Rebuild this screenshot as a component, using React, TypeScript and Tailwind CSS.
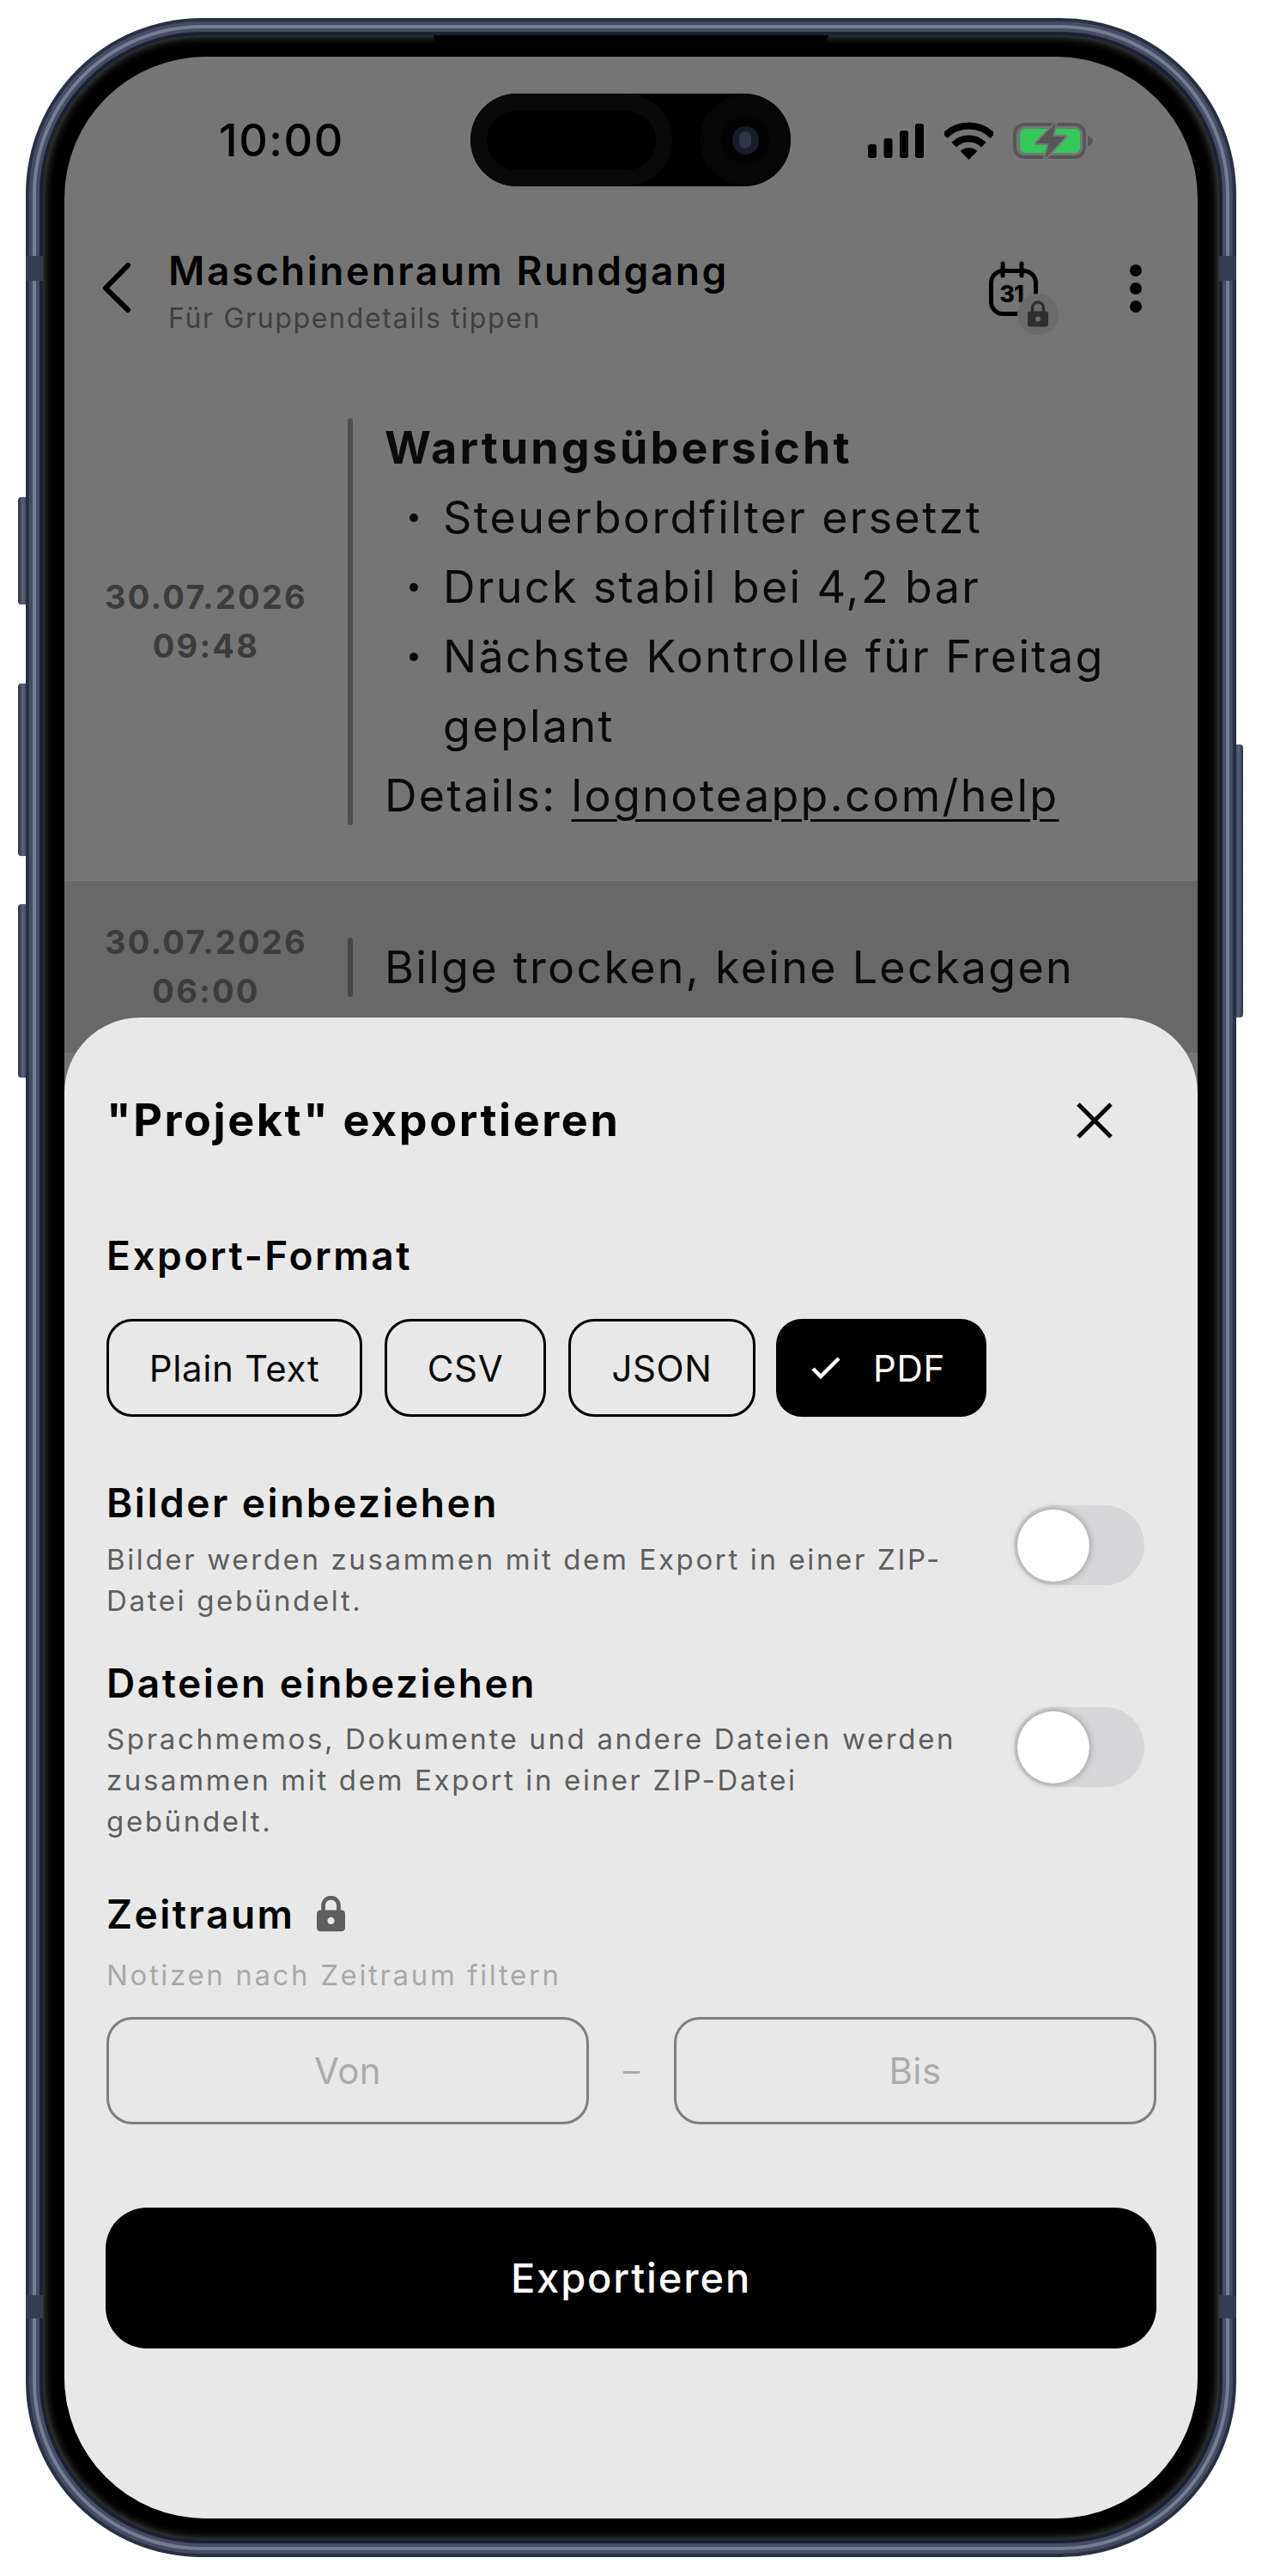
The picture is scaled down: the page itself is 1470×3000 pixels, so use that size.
import React from 'react';

const SANS = 'font-["Inter","Noto_Sans",sans-serif]';

const SideKey = ({ className }: { className: string }) => (
  <div className={`absolute left-[-9px] w-[11px] rounded-l-[4px] bg-gradient-to-r from-[#2b3145] via-[#5a6278] to-[#3a4156] ${className}`} />
);

const Band = ({ className }: { className: string }) => (
  <div className={`absolute w-[20px] bg-[#363c50] ${className}`} />
);

const Lock = ({ w, fill, hole }: { w: number; fill: string; hole: string }) => (
  <svg width={w} viewBox="0 0 24 30" fill="none">
    <path d="M5.5 14V8a6.5 6.5 0 0 1 13 0v6" stroke={fill} strokeWidth="3.4" />
    <rect y="12" width="24" height="18" rx="3" fill={fill} />
    <circle cx="12" cy="21" r="3" fill={hole} />
  </svg>
);

const StatusIcons = () => (
  <div className="flex items-center">
    <svg width="65" height="40" viewBox="0 0 65 40" fill="#000">
      <rect x="0" y="24" width="10" height="16" rx="3" />
      <rect x="18.5" y="17" width="10" height="23" rx="3" />
      <rect x="37" y="8" width="10" height="32" rx="3" />
      <rect x="55" y="0" width="10" height="40" rx="3" />
    </svg>
    <svg className="ml-[24px]" width="57" height="44" viewBox="0 0 57 44" fill="none">
      <path d="M.6 16.1a39.5 39.5 0 0 1 55.8 0" stroke="#000" strokeWidth="8" />
      <path d="M11.2 26.7a24.5 24.5 0 0 1 34.6 0" stroke="#000" strokeWidth="8" />
      <path d="M28.5 44l-9.9-9.9a14 14 0 0 1 19.8 0z" fill="#000" />
    </svg>
    <svg className="ml-[23px]" width="93" height="44" viewBox="0 0 93 44" fill="none">
      <rect x="2" y="3" width="81" height="38" rx="11" stroke="#565656" strokeWidth="4" />
      <rect x="8" y="8" width="70" height="28" rx="6" fill="#34c759" />
      <path d="M87 16c3 .5 6 3 6 6s-3 5.500-6 6z" fill="#565656" />
      <path d="M50 1 27 25h15l-5 18 24-26H46z" fill="#565656" stroke="#757575" strokeWidth="4" strokeLinejoin="round" paintOrder="stroke" />
    </svg>
  </div>
);

const CalendarLocked = () => (
  <svg width="82" height="84" viewBox="0 0 82 84" fill="none" className="mt-[19px] shrink-0 overflow-visible">
    <rect x="2.500" y="9.500" width="52" height="50" rx="14" stroke="#000" strokeWidth="5" />
    <path d="M16 1v14M38 1v14" stroke="#000" strokeWidth="5" strokeLinecap="round" />
    <text x="26" y="46" textAnchor="middle" fontFamily="Inter, sans-serif" fontSize="27" fontWeight="800" letterSpacing="-1" fill="#000">31</text>
    <circle cx="57" cy="60" r="24" fill="#6b6b6b" />
    <svg x="45" y="44" width="24" height="31" viewBox="0 0 24 30" fill="none">
      <path d="M5.500 14V8a6.500 6.500 0 0 1 13 0v6" stroke="#2e2e2e" strokeWidth="3.400" />
      <rect y="12" width="24" height="18" rx="3" fill="#2e2e2e" />
      <circle cx="12" cy="21" r="3" fill="#6b6b6b" />
    </svg>
  </svg>
);

const DateCol = ({ date, time }: { date: string; time: string }) => (
  <div className="w-[330px] shrink-0 text-center text-[38px] leading-[57px] font-bold tracking-[0.058em] text-[#3c3c3c]">
    <div>{date}</div>
    <div>{time}</div>
  </div>
);

const Bullet = ({ children }: { children: React.ReactNode }) => (
  <li className="flex">
    <span className="flex h-[81px] w-[68px] shrink-0 items-center justify-center">
      <span className="h-[10px] w-[10px] rounded-full bg-[#0a0a0a]" />
    </span>
    <span className="max-w-[830px]">{children}</span>
  </li>
);

const Toggle = ({ className }: { className: string }) => (
  <div className={`mr-[13px] flex h-[93px] w-[152px] shrink-0 items-center rounded-full bg-[#d6d6d8] pl-[4px] ${className}`}>
    <div className="h-[84px] w-[84px] rounded-full bg-white shadow-[0_0_8px_rgba(0,0,0,0.35)]" />
  </div>
);

const Chip = ({ label, className }: { label: string; className: string }) => (
  <div className={`flex h-[114px] items-center justify-center rounded-[30px] border-[3px] border-black text-[42px] tracking-[0.015em] text-[#0a0a0a] ${className}`}>
    {label}
  </div>
);

const DateInput = ({ label }: { label: string }) => (
  <div className="flex h-[125px] w-[562px] items-center justify-center rounded-[30px] border-[3px] border-[#7f7f7f] text-[42px] tracking-[0.01em] text-[#ababab]">
    {label}
  </div>
);

export default function App() {
  return (
    <div className={`h-[3000px] w-[1470px] overflow-hidden bg-white pl-[30px] pt-[21px] ${SANS}`}>
      <div className="relative h-[2957px] w-[1410px]">
        <SideKey className="top-[558px] h-[125px]" />
        <SideKey className="top-[775px] h-[201px]" />
        <SideKey className="top-[1032px] h-[202px]" />
        <div className="absolute right-[-8px] top-[846px] h-[318px] w-[10px] rounded-r-[4px] bg-gradient-to-l from-[#2b3145] via-[#5a6278] to-[#3a4156]" />

        {/* metal frame, rings from dark to the bright edge and back */}
        <div className="relative h-full rounded-[205px] bg-[#2a3043] p-[4px]">
          <div className="h-full rounded-[201px] bg-[#454d63] p-[4px]">
            <div className="h-full rounded-[197px] bg-[#757d92] p-[4px]">
              <div className="h-full rounded-[193px] bg-[#454d63] p-[4px]">
                <div className="h-full rounded-[189px] bg-[#1c2234] p-[4px]">
                  <div className="relative h-full rounded-[185px] bg-black p-[25px] shadow-[inset_0_0_12px_#666]">
                    <div className="absolute left-1/2 top-0 h-[8px] w-[460px] -translate-x-1/2 rounded-b-[10px] bg-black" />

                    {/* screen */}
                    <div className="relative h-[2867px] w-[1320px] overflow-hidden rounded-[165px] bg-[#757575]">
                      {/* dynamic island */}
                      <div className="absolute left-[473px] top-[43px] flex h-[108px] w-[373px] items-center rounded-full bg-black">
                        <div className="flex h-[108px] w-[235px] items-center justify-center rounded-full bg-[#090909]">
                          <div className="h-[69px] w-[197px] rounded-full bg-black" />
                        </div>
                        <div className="ml-[32px] flex h-[106px] w-[106px] items-center justify-center rounded-full bg-[#060606]">
                          <div className="flex h-[56px] w-[56px] items-center justify-center rounded-full bg-[#030303]">
                            <div className="flex h-[33px] w-[31px] items-center justify-center rounded-full bg-[#171c29]">
                              <div className="h-[20px] w-[14px] rounded-full bg-[#2f3649]" />
                            </div>
                          </div>
                        </div>
                      </div>

                      <div className="flex h-[196px] items-center justify-between pl-[180px] pr-[122px]">
                        <span className="text-[52px] font-medium leading-none tracking-[0.03em] text-black">10:00</span>
                        <StatusIcons />
                      </div>

                      {/* header */}
                      <div className="flex h-[160px] items-start pl-[43px] pt-[25px]">
                        <svg width="36" height="60" viewBox="0 0 36 60" fill="none" className="mt-[18px] shrink-0">
                          <path d="M31 4 5 30.500 31 56" stroke="#000" strokeWidth="6" strokeLinecap="round" strokeLinejoin="round" />
                        </svg>
                        <div className="ml-[42px] w-[956px] shrink-0">
                          <div className="text-[46px] font-semibold leading-[56px] tracking-[0.055em] text-black">Maschinenraum Rundgang</div>
                          <div className="mt-[8px] text-[32px] leading-[40px] tracking-[0.052em] text-[#3f3f3f]">Für Gruppendetails tippen</div>
                        </div>
                        <CalendarLocked />
                        <div className="ml-[82px] mt-[21px] flex shrink-0 flex-col gap-[7px]">
                          <span className="h-[14px] w-[14px] rounded-full bg-black" />
                          <span className="h-[14px] w-[14px] rounded-full bg-black" />
                          <span className="h-[14px] w-[14px] rounded-full bg-black" />
                        </div>
                      </div>

                      {/* notes */}
                      <div className="flex items-center py-[59px]">
                        <DateCol date="30.07.2026" time="09:48" />
                        <div className="my-[6px] w-[6px] self-stretch rounded-full bg-[#4d4d4d]" />
                        <div className="pl-[37px] text-[52px] leading-[81px] tracking-[0.045em] text-[#0a0a0a]">
                          <div className="font-bold tracking-[0.06em]">Wartungsübersicht</div>
                          <ul>
                            <Bullet>Steuerbordfilter ersetzt</Bullet>
                            <Bullet>Druck stabil bei 4,2 bar</Bullet>
                            <Bullet>Nächste Kontrolle für Freitag geplant</Bullet>
                          </ul>
                          <div>
                            Details: <span className="underline underline-offset-[9px] decoration-[3px]">lognoteapp.com/help</span>
                          </div>
                        </div>
                      </div>
                      <div className="flex h-[200px] items-center bg-[#686868]">
                        <DateCol date="30.07.2026" time="06:00" />
                        <div className="h-[69px] w-[6px] rounded-full bg-[#454545]" />
                        <div className="pl-[37px] text-[52px] leading-[81px] tracking-[0.044em] text-[#0a0a0a]">Bilge trocken, keine Leckagen</div>
                      </div>

                      {/* export sheet */}
                      <div className="absolute inset-x-0 bottom-0 h-[1748px] rounded-t-[88px] bg-[#e8e8e8] px-[49px] pt-[90px]">
                        <div className="flex h-[60px] items-center justify-between">
                          <div className="text-[52px] font-bold leading-[60px] tracking-[0.05em] text-black">"Projekt" exportieren</div>
                          <svg width="42" height="42" viewBox="0 0 42 42" fill="none" className="mr-[50px]">
                            <path d="M2 2l38 38M40 2 2 40" stroke="#000" strokeWidth="5" />
                          </svg>
                        </div>

                        <div className="mt-[99px] text-[46px] font-semibold leading-[56px] tracking-[0.055em] text-black">Export-Format</div>
                        <div className="mt-[46px] flex gap-[26px]">
                          <Chip label="Plain Text" className="w-[298px]" />
                          <Chip label="CSV" className="w-[188px]" />
                          <Chip label="JSON" className="w-[218px]" />
                          <div className="-ml-[2px] flex h-[114px] w-[245px] items-center rounded-[30px] bg-black pl-[41px] text-[42px] tracking-[0.015em] text-white">
                            <svg width="34" height="26" viewBox="0 0 34 26" fill="none">
                              <path d="M2 14l9 9L32 2" stroke="#fff" strokeWidth="4.500" />
                            </svg>
                            <span className="ml-[38px]">PDF</span>
                          </div>
                        </div>

                        <div className="mt-[72px] flex items-start justify-between">
                          <div>
                            <div className="text-[46px] font-semibold leading-[56px] tracking-[0.055em] text-black">Bilder einbeziehen</div>
                            <div className="mt-[14px] text-[33px] leading-[48px] tracking-[0.08em] text-[#5e5e5e]">
                              Bilder werden zusammen mit dem Export in einer ZIP-
                              <br />
                              Datei gebündelt.
                            </div>
                          </div>
                          <Toggle className="mt-[31px]" />
                        </div>

                        <div className="mt-[44px] flex items-start justify-between">
                          <div>
                            <div className="text-[46px] font-semibold leading-[56px] tracking-[0.055em] text-black">Dateien einbeziehen</div>
                            <div className="mt-[13px] text-[33px] leading-[48px] tracking-[0.08em] text-[#5e5e5e]">
                              Sprachmemos, Dokumente und andere Dateien werden
                              <br />
                              zusammen mit dem Export in einer ZIP-Datei
                              <br />
                              gebündelt.
                            </div>
                          </div>
                          <Toggle className="mt-[56px]" />
                        </div>

                        <div className="mt-[56px] flex h-[56px] items-center text-[46px] font-semibold leading-[56px] tracking-[0.055em] text-black">
                          Zeitraum
                          <span className="ml-[25px] flex">
                            <Lock w={33} fill="#5e5e5e" hole="#e8e8e8" />
                          </span>
                        </div>
                        <div className="mt-[19px] text-[33px] leading-[48px] tracking-[0.08em] text-[#a9a9a9]">Notizen nach Zeitraum filtern</div>
                        <div className="mt-[25px] flex w-[1223px] items-center justify-between">
                          <DateInput label="Von" />
                          <span className="text-[38px] text-[#a9a9a9]">–</span>
                          <DateInput label="Bis" />
                        </div>

                        <div className="-ml-[1px] mt-[97px] flex h-[164px] w-[1224px] items-center justify-center rounded-[48px] bg-black text-[47px] font-medium tracking-[0.04em] text-white">
                          Exportieren
                        </div>
                      </div>
                    </div>
                  </div>
                </div>
              </div>
            </div>
          </div>
          <Band className="left-0 top-[277px] h-[29px]" />
          <Band className="right-0 top-[277px] h-[29px]" />
          <Band className="bottom-[278px] left-0 h-[27px]" />
          <Band className="bottom-[278px] right-0 h-[27px]" />
        </div>
      </div>
    </div>
  );
}
